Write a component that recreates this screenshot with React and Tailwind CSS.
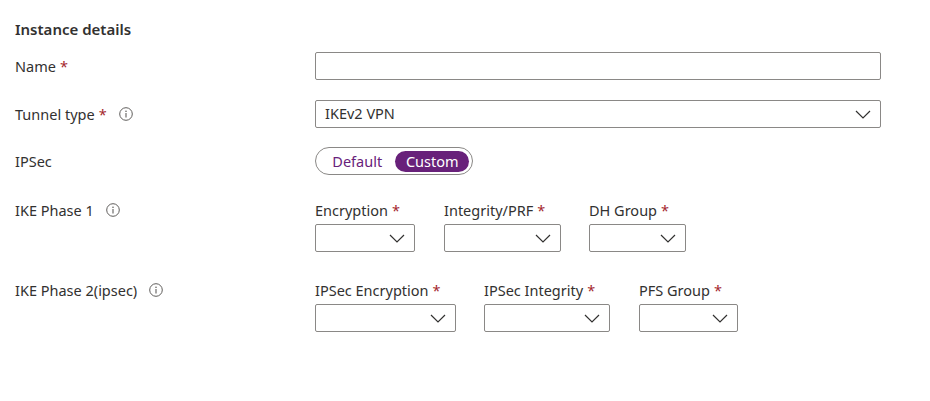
import React from "react";

const Star = () => <span className="text-[#a4262c] ml-1">*</span>;

const Info = () => (
  <svg width="14" height="14" viewBox="0 0 14 14" className="ml-3 inline-block">
    <circle cx="7" cy="7" r="6.3" fill="none" stroke="#605e5c" strokeWidth="1" />
    <circle cx="7" cy="4.2" r="0.8" fill="#605e5c" />
    <line x1="7" y1="6" x2="7" y2="10.5" stroke="#605e5c" strokeWidth="1.1" />
  </svg>
);

const Chevron = () => (
  <svg width="16" height="9" viewBox="0 0 16 9">
    <polyline points="1,1 8,8 15,1" fill="none" stroke="#323130" strokeWidth="1.2" />
  </svg>
);

const Drop = ({ label, w, ml }) => (
  <div className="flex flex-col" style={{ marginLeft: ml }}>
    <div className="h-5 leading-5 whitespace-nowrap">
      {label}
      <Star />
    </div>
    <div
      className="mt-[4px] h-[28px] border border-[#8a8886] rounded-[2px] flex items-center justify-end pr-[9px]"
      style={{ width: w }}
    >
      <Chevron />
    </div>
  </div>
);

export default function App() {
  return (
    <div
      className="w-[930px] h-[401px] bg-white text-[#323130] text-[14.5px] relative"
      style={{ fontFamily: '"Segoe UI", "Noto Sans", sans-serif' }}
    >
      <div className="pl-[15px] pt-[19px]">
        <div className="text-[15px] font-semibold leading-5 h-5">Instance details</div>

        <div className="flex items-center mt-[13px]">
          <div className="w-[300px] leading-5">
            Name<Star />
          </div>
          <div className="w-[566px] h-[28px] border border-[#8a8886] rounded-[2px]" />
        </div>

        <div className="flex items-center mt-[20px]">
          <div className="w-[300px] leading-5 flex items-center">
            <span>
              Tunnel type<Star />
            </span>
            <Info />
          </div>
          <div className="w-[566px] h-[28px] border border-[#8a8886] rounded-[2px] flex items-center justify-between pl-[9px] pr-[9px]">
            <span>IKEv2 VPN</span>
            <Chevron />
          </div>
        </div>

        <div className="flex items-center mt-[19px]">
          <div className="w-[300px] leading-5">IPSec</div>
          <div className="w-[158px] h-[28px] border border-[#8a8886] rounded-full flex items-center pl-[3px] pr-[3px]">
            <div className="w-[77px] text-center text-[#68217a] leading-5">Default</div>
            <div className="w-[74px] h-[21px] rounded-full bg-[#68217a] text-white flex items-center justify-center leading-5">
              Custom
            </div>
          </div>
        </div>

        <div className="flex items-start mt-[25px]">
          <div className="w-[300px] leading-5 h-5 flex items-center">
            IKE Phase 1<Info />
          </div>
          <div className="flex">
            <Drop label="Encryption" w={100} ml={0} />
            <Drop label="Integrity/PRF" w={117} ml={29} />
            <Drop label="DH Group" w={97} ml={28} />
          </div>
        </div>

        <div className="flex items-start mt-[28px]">
          <div className="w-[300px] leading-5 h-5 flex items-center">
            IKE Phase 2(ipsec)<Info />
          </div>
          <div className="flex">
            <Drop label="IPSec Encryption" w={141} ml={0} />
            <Drop label="IPSec Integrity" w={126} ml={28} />
            <Drop label="PFS Group" w={99} ml={29} />
          </div>
        </div>
      </div>
    </div>
  );
}
